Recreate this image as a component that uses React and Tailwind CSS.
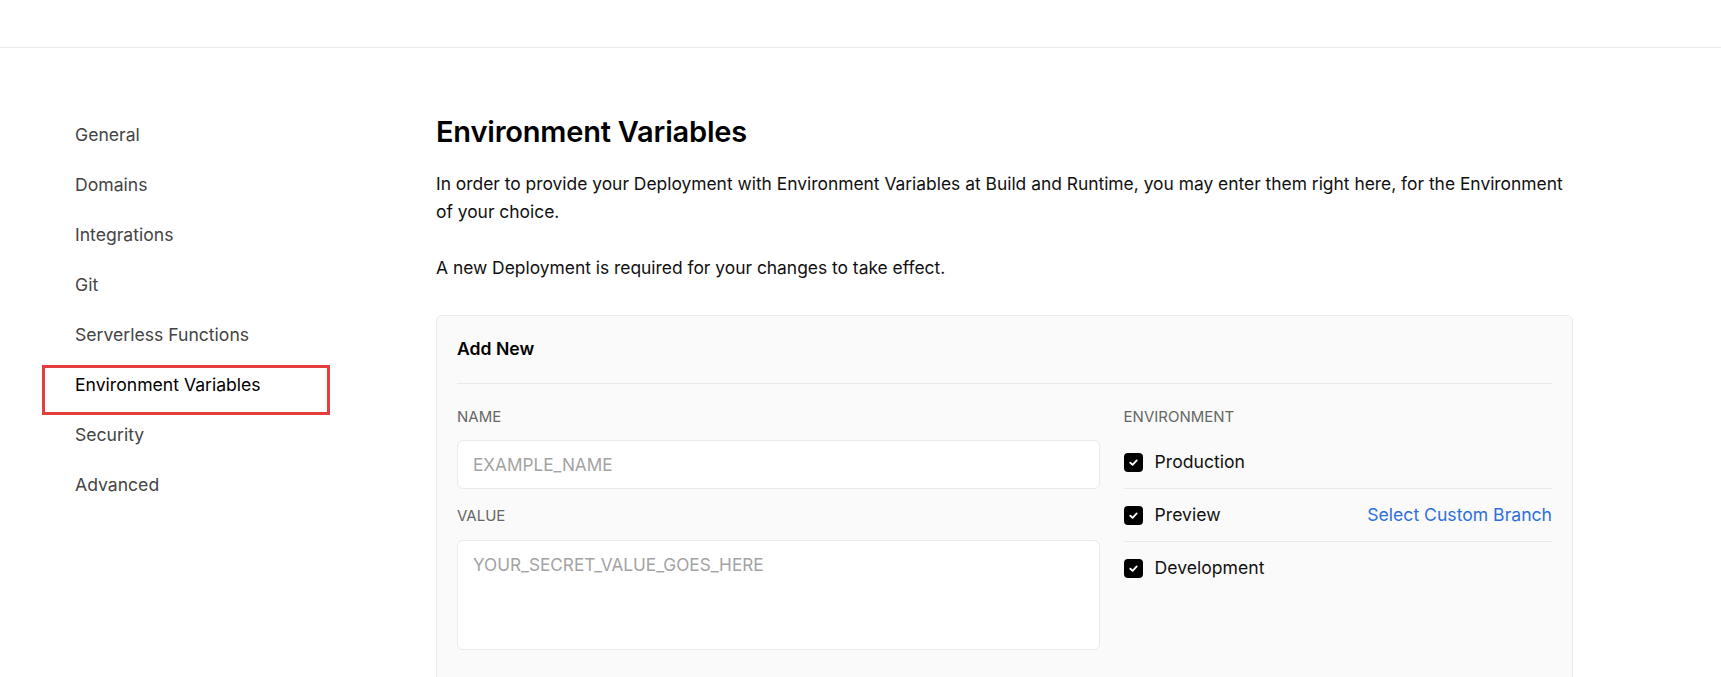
import React from 'react';

const navItems = [
  'General',
  'Domains',
  'Integrations',
  'Git',
  'Serverless Functions',
  'Environment Variables',
  'Security',
  'Advanced',
];

function CheckBox() {
  return (
    <span className="flex h-[19px] w-[19px] shrink-0 items-center justify-center rounded-[4px] bg-black">
      <svg width="11" height="11" viewBox="0 0 24 24" fill="none" stroke="white" strokeWidth="4" strokeLinecap="round" strokeLinejoin="round">
        <polyline points="5 12.5 10 17 19 7.5" />
      </svg>
    </span>
  );
}

function EnvRow({ label, link, last }) {
  return (
    <div className={'flex items-center py-[14px] ' + (last ? '' : 'border-b border-[#eaeaea]')}>
      <CheckBox />
      <span className="ml-[12px] text-[17.6px] leading-6 text-[#111]">{label}</span>
      {link && <span className="ml-auto text-[17.6px] leading-6 text-[#2f6fdc]">{link}</span>}
    </div>
  );
}

export default function App() {
  return (
    <div className="min-h-screen bg-white font-['Inter',sans-serif] text-black">
      <header className="h-12 border-b border-[#eaeaea]" />
      <div className="flex pl-[75px] pt-[66px]">
        <nav className="flex w-[361px] shrink-0 flex-col gap-[26px] pt-[9px]">
          {navItems.map((item) => (
            <div key={item} className="relative">
              <span className={'text-[17.6px] leading-6 ' + (item === 'Environment Variables' ? 'text-black' : 'text-[#444]')}>
                {item}
              </span>
              {item === 'Environment Variables' && (
                <span className="pointer-events-none absolute -left-[33px] -top-[8px] h-[50px] w-[288px] border-[3px] border-[#e53e3e]" />
              )}
            </div>
          ))}
        </nav>

        <main className="w-[1137px]">
          <h1 className="text-[29px] font-semibold leading-9 tracking-[-0.2px]">Environment Variables</h1>
          <p className="mt-[20px] text-[17.4px] leading-7 text-[#111]">
            In order to provide your Deployment with Environment Variables at Build and Runtime, you may enter them right here, for the Environment of your choice.
          </p>
          <p className="mt-[28px] text-[17.4px] leading-7 text-[#111]">
            A new Deployment is required for your changes to take effect.
          </p>

          <div className="mt-[33px] rounded-[6px] border border-[#eaeaea] bg-[#fafafa] px-5 pb-10">
            <div className="border-b border-[#eaeaea] pb-[22px] pt-[21px]">
              <h2 className="text-[17.6px] font-semibold leading-6">Add New</h2>
            </div>

            <div className="grid grid-cols-[3fr_2fr] gap-6 pt-[23px]">
              <div>
                <label className="block text-[15px] leading-5 text-[#666]">NAME</label>
                <div className="mt-[13px] flex h-[49px] items-center rounded-[6px] border border-[#eaeaea] bg-white px-[15px]">
                  <span className="text-[17.2px] text-[#a3a3a3]">EXAMPLE_NAME</span>
                </div>
                <label className="mt-[17px] block text-[15px] leading-5 text-[#666]">VALUE</label>
                <div className="mt-[14px] h-[110px] rounded-[6px] border border-[#eaeaea] bg-white px-[15px] pt-[12px]">
                  <span className="text-[17.2px] leading-6 text-[#a3a3a3]">YOUR_SECRET_VALUE_GOES_HERE</span>
                </div>
              </div>

              <div>
                <label className="block text-[15px] leading-5 text-[#666]">ENVIRONMENT</label>
                <div className="mt-[9px]">
                  <EnvRow label="Production" />
                  <EnvRow label="Preview" link="Select Custom Branch" />
                  <EnvRow label="Development" last />
                </div>
              </div>
            </div>
          </div>
        </main>
      </div>
    </div>
  );
}
